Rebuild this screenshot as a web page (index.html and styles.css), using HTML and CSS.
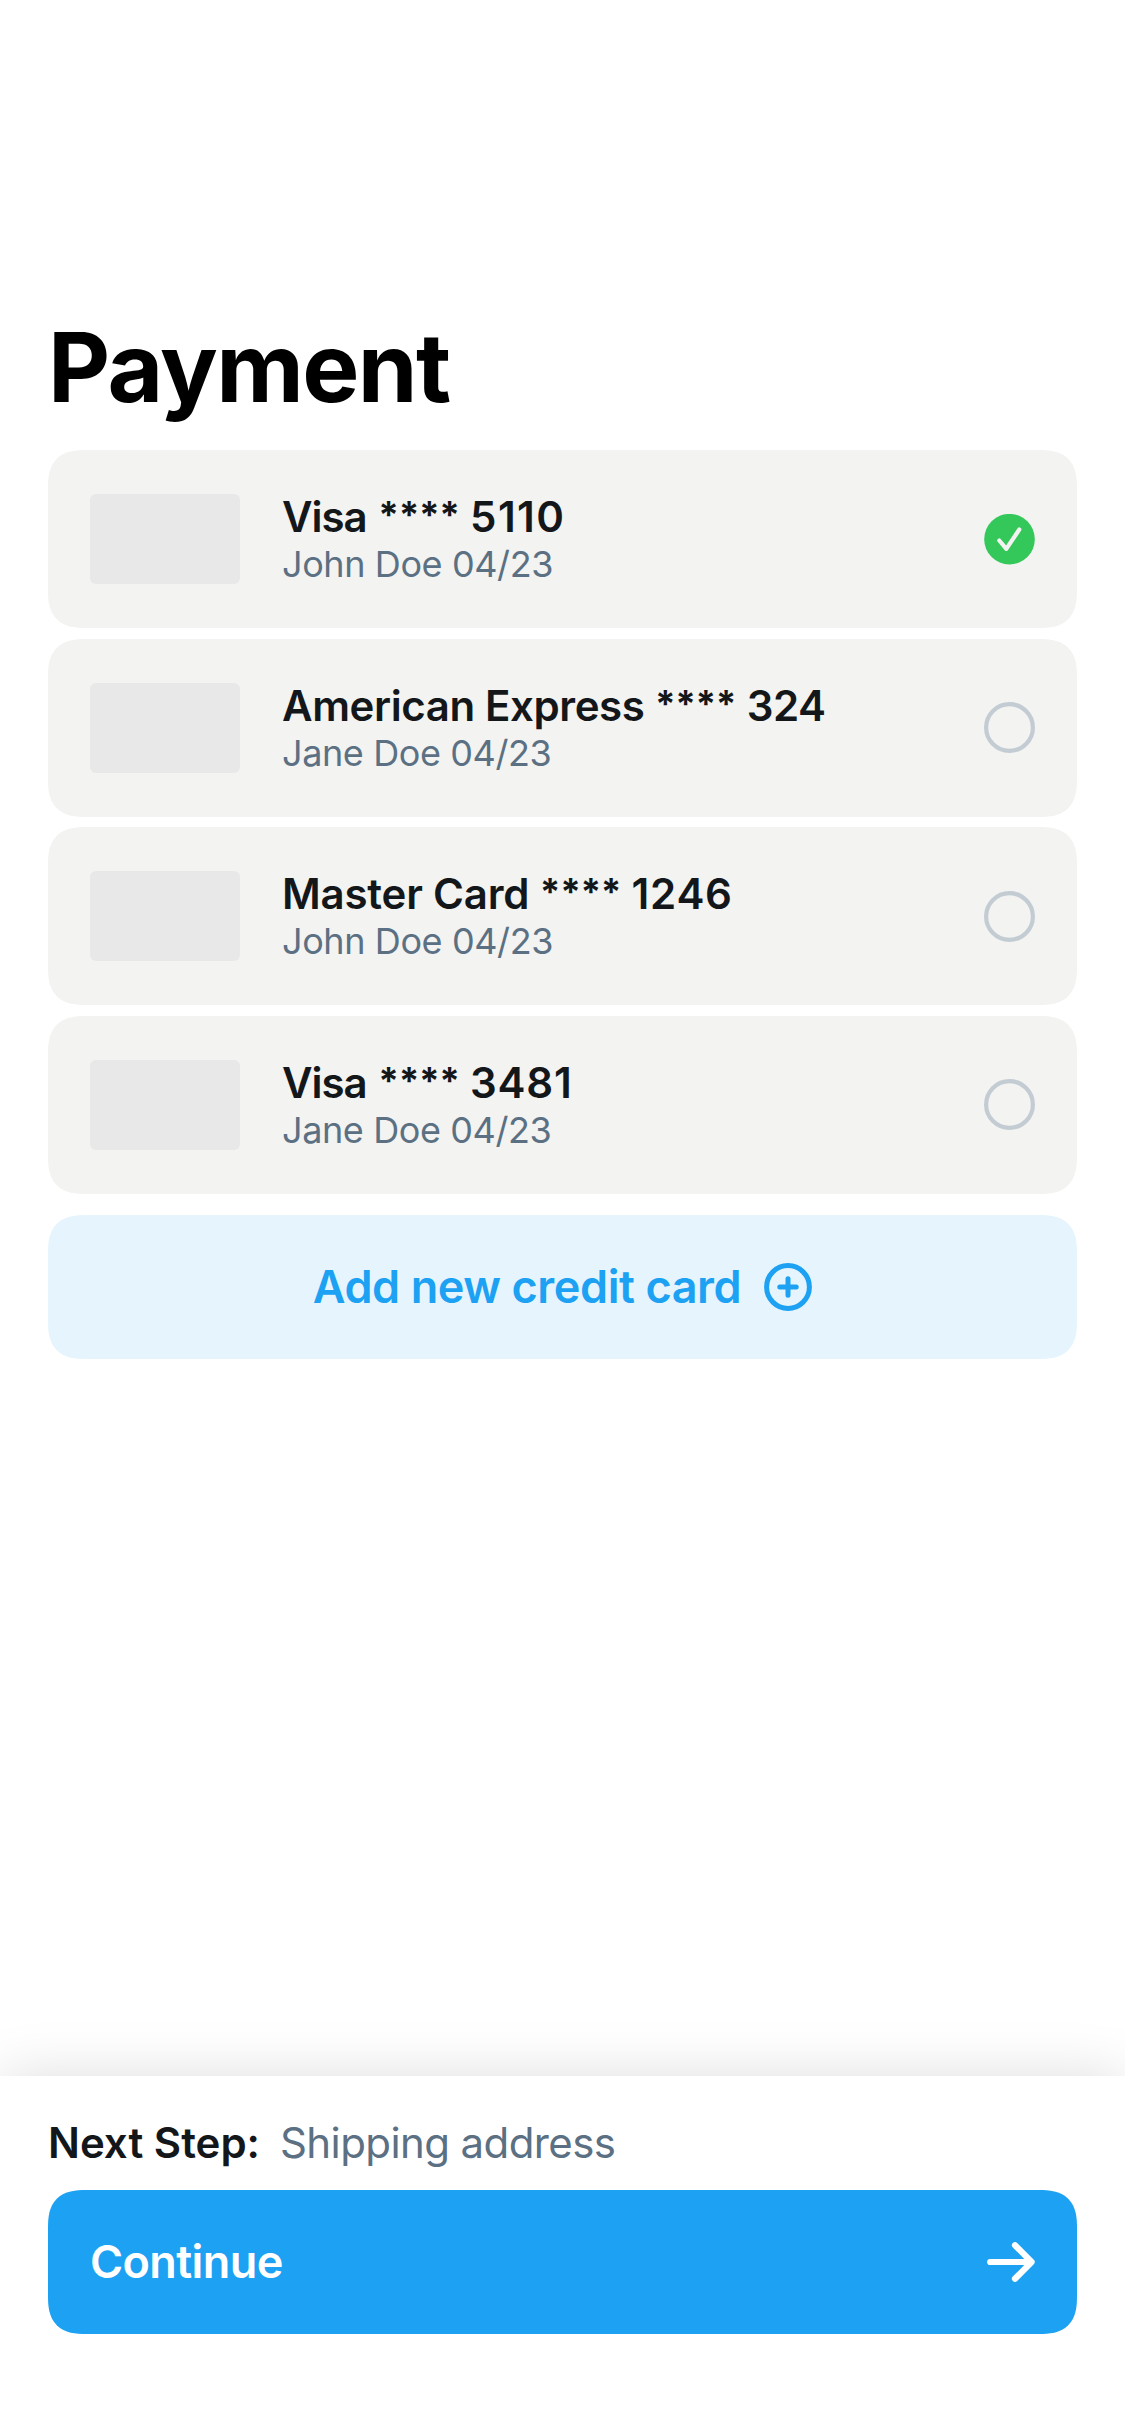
FILE: index.html
```html
<!DOCTYPE html>
<html lang="en">
<head>
<meta charset="utf-8">
<title>Payment</title>
<link rel="stylesheet" href="styles.css">
</head>
<body>
<div class="screen">
  <main class="content">
    <h1 class="title">Payment</h1>
    <ul class="cards">
      <li class="card">
        <div class="card-logo"></div>
        <div class="card-info">
          <div class="card-name"><span class="brand brand-visa">Visa</span> <span class="mask">****</span> <span class="digits digits-wide">5110</span></div>
          <div class="card-owner">John Doe 04/23</div>
        </div>
        <svg class="radio" viewBox="0 0 51 51">
          <circle class="radio-fill" cx="25.5" cy="25.2" r="25.3"/>
          <path class="radio-check" d="M15.3 26.5L22.3 34.8L35.3 15.5"/>
        </svg>
      </li>
      <li class="card">
        <div class="card-logo"></div>
        <div class="card-info">
          <div class="card-name"><span class="brand">American Express</span> <span class="mask">****</span> <span class="digits digits-narrow">324</span></div>
          <div class="card-owner">Jane Doe 04/23</div>
        </div>
        <svg class="radio" viewBox="0 0 51 51"><circle class="radio-ring" cx="25.5" cy="25.5" r="23.4"/></svg>
      </li>
      <li class="card">
        <div class="card-logo"></div>
        <div class="card-info">
          <div class="card-name"><span class="brand brand-master">Master Card</span> <span class="mask">****</span> <span class="digits">1246</span></div>
          <div class="card-owner">John Doe 04/23</div>
        </div>
        <svg class="radio" viewBox="0 0 51 51"><circle class="radio-ring" cx="25.5" cy="25.5" r="23.4"/></svg>
      </li>
      <li class="card">
        <div class="card-logo"></div>
        <div class="card-info">
          <div class="card-name"><span class="brand brand-visa">Visa</span> <span class="mask">****</span> <span class="digits">3481</span></div>
          <div class="card-owner">Jane Doe 04/23</div>
        </div>
        <svg class="radio" viewBox="0 0 51 51"><circle class="radio-ring" cx="25.5" cy="25.5" r="23.4"/></svg>
      </li>
    </ul>
    <button class="add-card" type="button">
      <span class="add-label">Add new credit card</span>
      <svg class="add-icon" viewBox="0 0 48 48"><circle cx="24" cy="24" r="21.4"/><path d="M24 15.8V32.2M15.8 24H32.2"/></svg>
    </button>
  </main>
  <footer class="footer">
    <p class="next-step"><strong class="next-label">Next Step:</strong><span class="next-value">Shipping address</span></p>
    <button class="continue" type="button">
      <span class="continue-label">Continue</span>
      <svg class="continue-icon" viewBox="0 0 48 42"><path d="M3.2 21H43.5M28 4.2L44.6 21L28 37.8"/></svg>
    </button>
  </footer>
</div>
</body>
</html>
```
FILE: styles.css
```css
* {
  box-sizing: border-box;
  margin: 0;
  padding: 0;
}

body {
  background: #fff;
  color: #14171a;
  font-family: Inter, "Liberation Sans", sans-serif;
}

.screen {
  display: flex;
  flex-direction: column;
  justify-content: space-between;
  height: 2436px;
  overflow: hidden;
}

.content {
  padding: 309px 48px 0;
}

.title {
  margin-bottom: 25px;
  color: #000;
  font-size: 96px;
  font-weight: 700;
  line-height: 116px;
  letter-spacing: -1.57px;
}

.cards {
  display: flex;
  flex-direction: column;
  gap: 10.67px;
  list-style: none;
}

.card,
.add-card,
.continue {
  border-radius: 38px;
  corner-shape: superellipse(1.4);
}

.card {
  display: flex;
  align-items: center;
  height: 178px;
  padding: 0 42px;
  background: #f3f3f1;
}

.card-logo {
  width: 150px;
  height: 90px;
  border-radius: 6px;
  background: #e8e8e8;
}

.card-info {
  flex: 1;
  margin-left: 42px;
  white-space: nowrap;
}

.card-name {
  height: 50px;
  font-size: 42px;
  font-weight: 600;
  line-height: 50px;
}

.brand {
  letter-spacing: -0.4px;
}

.brand-visa {
  margin-right: 1px;
  letter-spacing: -1px;
}

.brand-master {
  letter-spacing: -0.2px;
}

.mask {
  font-size: 37px;
  font-weight: 700;
  line-height: 0;
  letter-spacing: -0.4px;
  vertical-align: 4px;
}

.digits {
  letter-spacing: 0.75px;
}

.digits-wide {
  letter-spacing: 1.4px;
}

.digits-narrow {
  letter-spacing: -0.5px;
}

.card-owner {
  color: #5b7083;
  font-size: 36px;
  line-height: 44px;
  letter-spacing: -0.4px;
}

.radio {
  width: 51px;
  height: 51px;
  fill: none;
}

.radio-fill {
  fill: #34c759;
}

.radio-check {
  stroke: #f3f3f1;
  stroke-width: 4.2;
  stroke-linecap: round;
  stroke-linejoin: round;
}

.radio-ring {
  stroke: #c4ccd3;
  stroke-width: 4.2;
}

.add-card {
  display: flex;
  align-items: center;
  justify-content: center;
  gap: 23px;
  width: 100%;
  height: 144px;
  margin-top: 21px;
  border: 0;
  background: #e6f5fd;
  color: #1da1f2;
  font: 600 45px/54px Inter, "Liberation Sans", sans-serif;
}

.add-label {
  letter-spacing: -0.42px;
}

.add-icon {
  width: 48px;
  height: 48px;
  fill: none;
  stroke: currentColor;
  stroke-width: 5;
  stroke-linecap: round;
}

.footer {
  padding: 42px 48px 102px;
  background: #fff;
  box-shadow: 0 0 54px rgba(0, 0, 0, 0.135);
}

.next-step {
  display: flex;
  gap: 20px;
  margin-bottom: 22px;
  font-size: 42px;
  line-height: 50px;
}

.next-label {
  font-weight: 600;
}

.next-value {
  color: #5b7083;
  letter-spacing: -0.6px;
}

.continue {
  display: flex;
  align-items: center;
  justify-content: space-between;
  width: 100%;
  height: 144px;
  padding: 0 42px;
  border: 0;
  background: #1da1f2;
  color: #fff;
  font: 600 45px/54px Inter, "Liberation Sans", sans-serif;
}

.continue-label {
  letter-spacing: -0.6px;
}

.continue-icon {
  width: 48px;
  height: 42px;
  fill: none;
  stroke: currentColor;
  stroke-width: 6.2;
  stroke-linecap: round;
  stroke-linejoin: round;
}
```
